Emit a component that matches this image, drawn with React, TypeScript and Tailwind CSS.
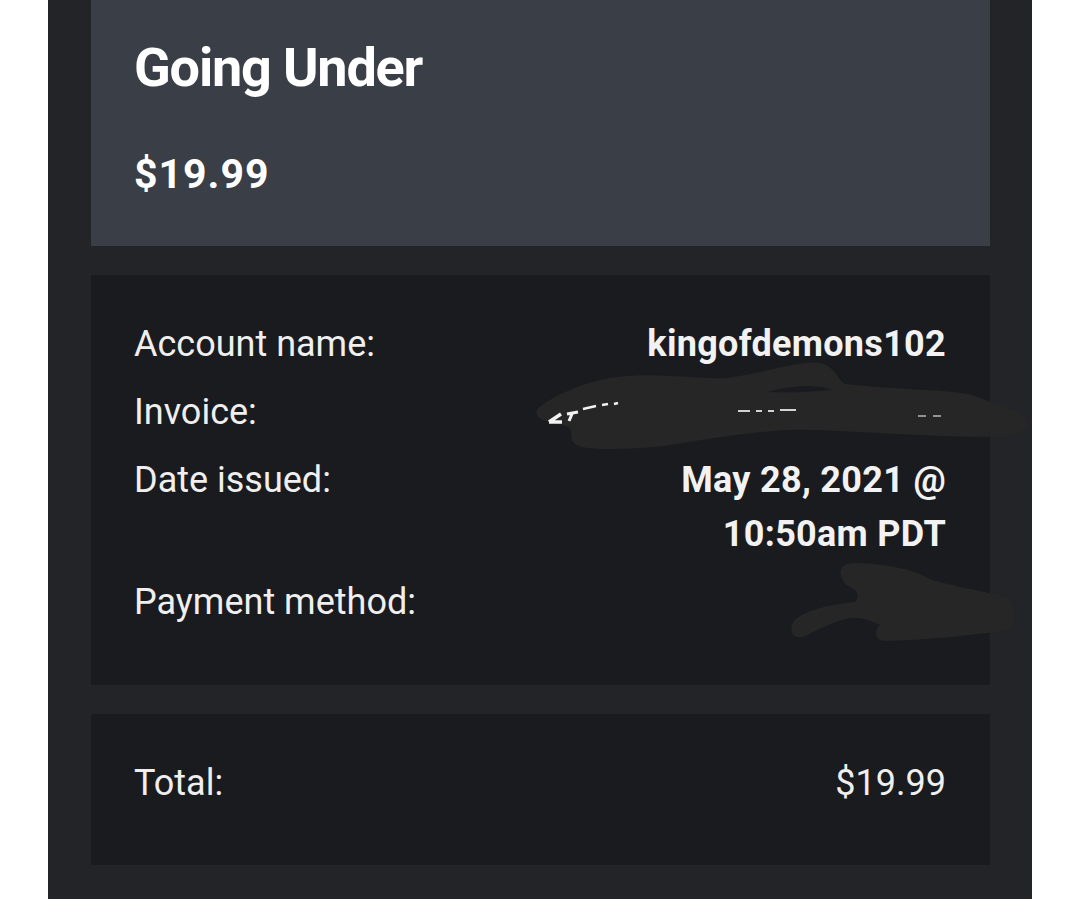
import React from "react";

const rows: { label: string; value: string }[] = [
  { label: "Account name:", value: "kingofdemons102" },
  { label: "Invoice:", value: "" },
  { label: "Date issued:", value: "May 28, 2021 @ 10:50am PDT" },
  { label: "Payment method:", value: "" },
];

// the hand-drawn redaction marks over the invoice and payment fields
function Scribbles() {
  return (
    <svg className="pointer-events-none absolute left-0 top-0" width="1080" height="899" viewBox="0 0 1080 899">
      <path
        fill="#262626"
        d="M537 410 C545 400, 580 382, 617 377 C660 372, 700 380, 727 378 C770 372, 800 360, 820 363
           C835 366, 836 378, 845 384 C880 388, 930 390, 953 392 C975 394, 985 400, 995 404
           C1010 408, 1025 412, 1028 422 C1030 432, 1010 437, 990 437 C900 436, 820 428, 787 430
           C720 434, 680 446, 640 448 C600 450, 575 450, 572 440 C570 432, 575 428, 560 424
           C545 422, 534 418, 537 410 Z"
      />
      <path fill="#1a1b1f" d="M767 392 C790 386, 815 383, 832 390 C810 392, 785 393, 767 392 Z" />
      <g stroke="#f2f2f2" fill="none">
        <path d="M549 422 L561 414 M549 422 L562 422" strokeWidth="3.5" />
        <path d="M567 414 L578 412 M572 414 L569 421" strokeWidth="3" />
        <path d="M583 409 L596 406 M602 405 L608 404 M614 404 L618 403" strokeWidth="2.5" />
        <path d="M738 411 L750 411 M756 411 L762 411 M768 411 L774 411 M780 410 L796 410" strokeWidth="2" opacity="0.85" />
        <path d="M918 416 L926 416 M933 416 L941 416" strokeWidth="1.5" opacity="0.7" />
      </g>
      <path
        fill="#262626"
        d="M843 580 C836 568, 845 562, 858 563 C890 564, 915 570, 932 580 C960 588, 990 592, 1008 598
           C1016 605, 1016 625, 1008 630 C970 636, 920 640, 885 641 C874 640, 874 630, 880 625
           C870 620, 860 617, 850 618 C830 622, 815 632, 803 637 C790 640, 788 625, 797 618
           C812 608, 835 604, 855 602 C860 597, 858 590, 850 587 C846 585, 844 583, 843 580 Z"
      />
    </svg>
  );
}

export default function App() {
  return (
    <div className="relative min-h-screen bg-white font-['Roboto','Liberation_Sans',sans-serif]">
      <div className="ml-[48px] w-[984px] bg-[#222428] pl-[43px] pr-[42px] pb-[40px]">
        <div className="bg-[#3a3e46] px-[43px] pt-[36px] pb-[48px] text-white">
          <h1 className="text-[54px] font-bold leading-[64px] tracking-[-1.2px]">Going Under</h1>
          <div className="mt-[50px] text-[41px] font-bold leading-[48px] tracking-[1px]">$19.99</div>
        </div>

        <div className="mt-[29px] flex flex-col gap-[14px] bg-[#1a1b1f] pl-[43px] pr-[44px] pt-[42px] pb-[56px]">
          {rows.map((r) => (
            <div key={r.label} className="flex justify-between text-[36px] leading-[54px]">
              <span className="text-[#efefef]">{r.label}</span>
              <span className="max-w-[340px] text-right font-bold tracking-[0.3px] text-[#f2f2f2]">{r.value}</span>
            </div>
          ))}
        </div>

        <div className="mt-[29px] flex justify-between bg-[#1a1b1f] pl-[43px] pr-[44px] pt-[42px] pb-[55px] text-[36px] leading-[54px] text-[#efefef]">
          <span>Total:</span>
          <span>$19.99</span>
        </div>
      </div>
      <Scribbles />
    </div>
  );
}
